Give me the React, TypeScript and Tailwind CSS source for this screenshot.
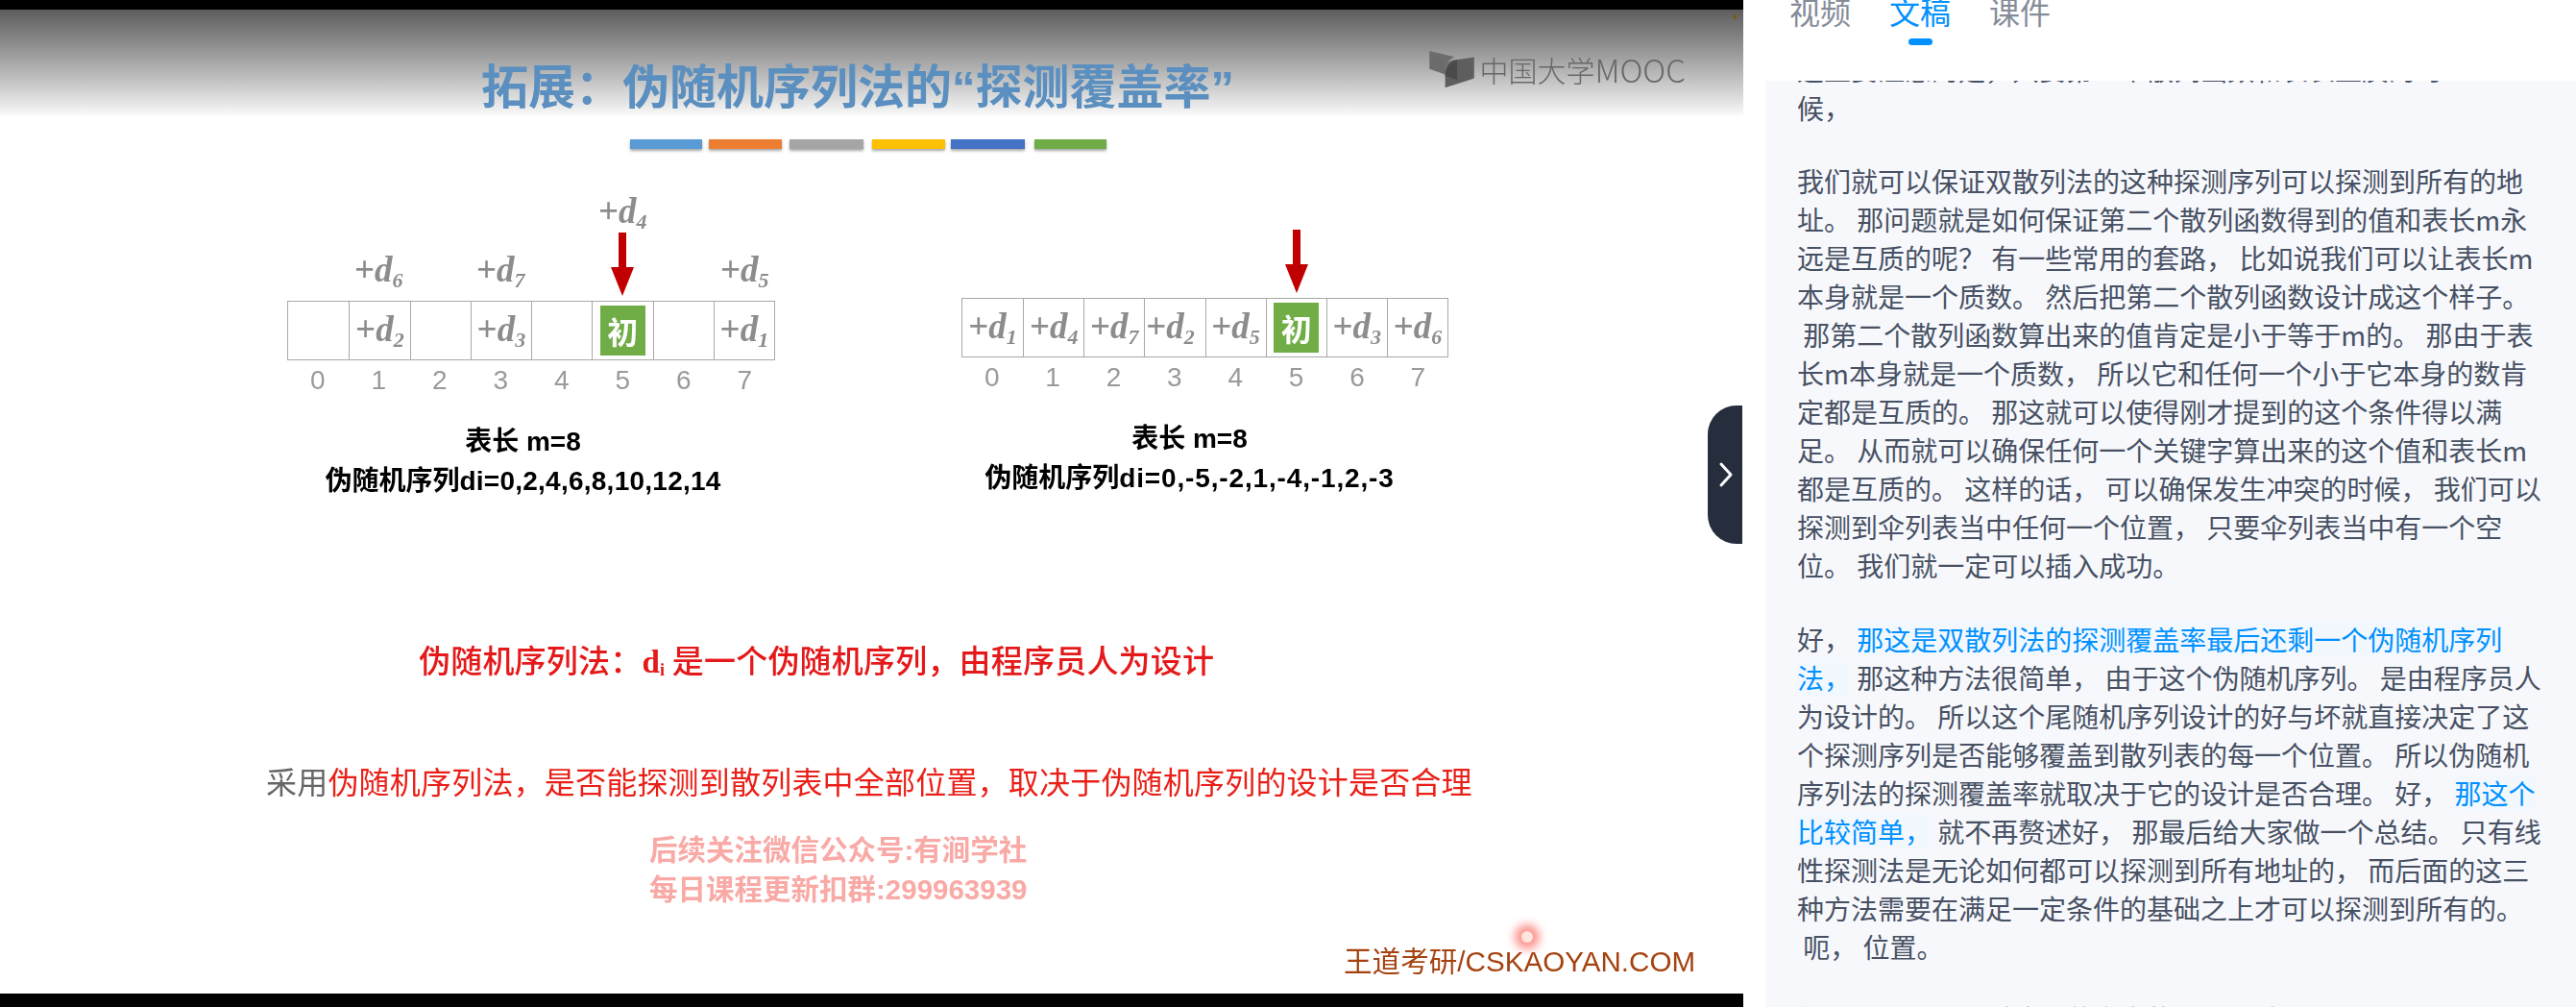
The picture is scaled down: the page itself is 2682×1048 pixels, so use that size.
import React from "react";

const cjk = "font-['Liberation_Sans','Noto_Sans_CJK_SC',sans-serif]";

function Probe({ n }: { n: number }) {
  return (
    <span className="font-['Liberation_Serif',serif] font-bold text-[#8c8c8c] text-[37px] leading-[40px] whitespace-nowrap">
      +<i>d</i>
      <i className="text-[22px] align-[-6px]">{n}</i>
    </span>
  );
}

function Arrow() {
  return (
    <svg width="24" height="66" viewBox="0 0 24 66" className="block">
      <path d="M8 0H16V36H24L12 66L0 36H8Z" fill="#c00000" />
    </svg>
  );
}

function Diagram({
  zoneH,
  above,
  cells,
  extra,
  captionShift,
  seq,
  seqTrack,
  width,
  nudge,
}: {
  zoneH: string;
  above: Record<number, number>;
  cells: (number | null | "init")[];
  extra?: number;
  captionShift: string;
  seq: string;
  seqTrack: string;
  width: string;
  nudge?: number;
}) {
  return (
    <div className={`flex flex-col ${width}`}>
      <div className={`grid grid-cols-8 ${zoneH}`}>
        {Array.from({ length: 8 }).map((_, i) => (
          <div key={i} className="flex flex-col items-center justify-end">
            {i === 5 ? (
              <>
                {extra !== undefined && (
                  <div className="-mb-[9px]">
                    <Probe n={extra} />
                  </div>
                )}
                <div className="mb-[5px]">
                  <Arrow />
                </div>
              </>
            ) : above[i] !== undefined ? (
              <div className="mb-[1px]">
                <Probe n={above[i]} />
              </div>
            ) : null}
          </div>
        ))}
      </div>
      <div className="grid grid-cols-8 h-[62px] border border-[#a8a8a8]">
        {cells.map((c, i) => (
          <div
            key={i}
            className={`flex items-center justify-center overflow-visible ${i > 0 ? "border-l border-[#a8a8a8]" : ""}`}
          >
            {c === "init" ? (
              <div className="w-[47px] h-[52px] bg-[#70ad47] flex items-center justify-center text-white text-[32px] font-bold font-['Noto_Sans_CJK_SC',sans-serif]">
                初
              </div>
            ) : c !== null ? (
              <div className={`pt-[8px] ${nudge === i ? "mr-[10px]" : ""}`}>
                <Probe n={c} />
              </div>
            ) : null}
          </div>
        ))}
      </div>
      <div className="grid grid-cols-8 h-[42px] items-center text-center text-[28px] leading-[42px] text-[#9a9a9a] font-['Liberation_Sans',sans-serif]">
        {[0, 1, 2, 3, 4, 5, 6, 7].map((n) => (
          <div key={n}>{n}</div>
        ))}
      </div>
      <div
        className={`mt-[23px] ${captionShift} text-center text-black font-bold text-[28px] whitespace-nowrap ${cjk}`}
      >
        <div className="leading-[40px]">表长 m=8</div>
        <div className="leading-[41px]">
          伪随机序列<span className={seqTrack}>{seq}</span>
        </div>
      </div>
    </div>
  );
}

type Seg = string | { b: string };

const para1: Seg[][] = [
  ["我们就可以保证双散列法的这种探测序列可以探测到所有的地"],
  ["址。 那问题就是如何保证第二个散列函数得到的值和表长m永"],
  ["远是互质的呢？ 有一些常用的套路， 比如说我们可以让表长m"],
  ["本身就是一个质数。 然后把第二个散列函数设计成这个样子。"],
  [" 那第二个散列函数算出来的值肯定是小于等于m的。 那由于表"],
  ["长m本身就是一个质数， 所以它和任何一个小于它本身的数肯"],
  ["定都是互质的。 那这就可以使得刚才提到的这个条件得以满"],
  ["足。 从而就可以确保任何一个关键字算出来的这个值和表长m"],
  ["都是互质的。 这样的话， 可以确保发生冲突的时候， 我们可以"],
  ["探测到伞列表当中任何一个位置， 只要伞列表当中有一个空"],
  ["位。 我们就一定可以插入成功。"],
];

const para2: Seg[][] = [
  ["好， ", { b: "那这是双散列法的探测覆盖率最后还剩一个伪随机序列" }],
  [{ b: "法，" }, " 那这种方法很简单， 由于这个伪随机序列。 是由程序员人"],
  ["为设计的。 所以这个尾随机序列设计的好与坏就直接决定了这"],
  ["个探测序列是否能够覆盖到散列表的每一个位置。 所以伪随机"],
  ["序列法的探测覆盖率就取决于它的设计是否合理。 好， ", { b: "那这个" }],
  [{ b: "比较简单，" }, " 就不再赘述好， 那最后给大家做一个总结。 只有线"],
  ["性探测法是无论如何都可以探测到所有地址的， 而后面的这三"],
  ["种方法需要在满足一定条件的基础之上才可以探测到所有的。"],
  [" 呃， 位置。"],
];

function Para({ lines, gap }: { lines: Seg[][]; gap: string }) {
  return (
    <div className={gap}>
      {lines.map((l, i) => (
        <div key={i} className="whitespace-pre h-[40px]">
          {l.map((s, j) =>
            typeof s === "string" ? (
              <span key={j}>{s}</span>
            ) : (
              <span key={j} className="text-[#0091ff] bg-[#f3f8ff]">
                {s.b}
              </span>
            ),
          )}
        </div>
      ))}
    </div>
  );
}

export default function App() {
  return (
    <div className="flex w-[2682px] h-[1048px] overflow-hidden bg-white">
      <div className="relative flex flex-col w-[1815px] h-full shrink-0">
        <div className="h-[10px] bg-black shrink-0" />
        <div className="flex-1 bg-white flex flex-col blur-[0.5px]">
          <header className="h-[110px] shrink-0 bg-linear-to-b from-[#5d5d5d] to-[#f9f9f9] flex items-start pl-[501px] pt-[42px] pr-[60px]">
            <h1
              className={`mt-[15px] text-[49px] leading-[48px] font-bold text-[#5a8fbf] whitespace-nowrap ${cjk}`}
            >
              拓展：伪随机序列法的“探测覆盖率”
            </h1>
            <div className="ml-auto flex items-center text-[#686868] font-['Noto_Sans_CJK_SC',sans-serif] font-light">
              <svg width="48" height="40" viewBox="20 40 145 122" className="mr-[4px] shrink-0">
                <path d="M20 43L100 62Q72 72 70 118L20 100Z" fill="#6c6c6c" />
                <path d="M162 63V130L70 160V118Q72 72 100 72Z" fill="#5e5e5e" />
                <path d="M70 118Q72 85 108 70V135L70 122Z" fill="#4a4a4a" />
              </svg>
              <span className="text-[30px] leading-[38px] whitespace-nowrap">中国大学</span>
              <span className="text-[33px] leading-[38px]">MOOC</span>
            </div>
          </header>

          <div className="flex pl-[656px] mt-[25px] shrink-0">
            <div className="w-[75px] h-[10px] mr-[7px] bg-[#5b9bd5] shadow-[0_2px_3px_rgba(0,0,0,0.35)]" />
            <div className="w-[76px] h-[10px] mr-[8px] bg-[#ed7d31] shadow-[0_2px_3px_rgba(0,0,0,0.35)]" />
            <div className="w-[77px] h-[10px] mr-[9px] bg-[#a5a5a5] shadow-[0_2px_3px_rgba(0,0,0,0.35)]" />
            <div className="w-[76px] h-[10px] mr-[6px] bg-[#ffc000] shadow-[0_2px_3px_rgba(0,0,0,0.35)]" />
            <div className="w-[77px] h-[10px] mr-[10px] bg-[#4472c4] shadow-[0_2px_3px_rgba(0,0,0,0.35)]" />
            <div className="w-[75px] h-[10px] bg-[#70ad47] shadow-[0_2px_3px_rgba(0,0,0,0.35)]" />
          </div>

          <div className="flex items-start pl-[299px] gap-[194px] shrink-0 h-[366px]">
            <Diagram
              width="w-[508px]"
              zoneH="h-[158px]"
              above={{ 1: 6, 3: 7, 7: 5 }}
              extra={4}
              cells={[null, 2, null, 3, null, "init", null, 1]}
              captionShift="mr-[17px]"
              seq="di=0,2,4,6,8,10,12,14"
              seqTrack="tracking-[0.25px]"
            />
            <Diagram
              width="w-[507px]"
              zoneH="h-[155px]"
              above={{}}
              cells={[1, 4, 7, 2, 5, "init", 3, 6]}
              captionShift="mr-[32px]"
              seq="di=0,-5,-2,1,-4,-1,2,-3"
              seqTrack="tracking-[0.85px]"
              nudge={3}
            />
          </div>

          <div className="mt-[140px] pl-[436px] h-[50px] leading-[50px] text-[33px] tracking-[0.2px] font-medium text-[#e5191a] whitespace-nowrap font-['Noto_Sans_CJK_SC',sans-serif]">
            伪随机序列法：
            <span className="font-['Liberation_Serif',serif] font-bold">d</span>
            <span className="font-['Liberation_Serif',serif] font-bold text-[18px] align-[-3px]">i</span>{" "}
            是一个伪随机序列，由程序员人为设计
          </div>

          <div className="mt-[76px] pl-[277px] h-[50px] leading-[50px] text-[32px] tracking-[0.2px] whitespace-nowrap text-[#ea2018] font-['Noto_Sans_CJK_SC',sans-serif]">
            <span className="text-[#666666]">采用</span>
            伪随机序列法，是否能探测到散列表中全部位置，取决于伪随机序列的设计是否合理
          </div>

          <div className={`mt-[27px] pl-[676px] text-[29.5px] font-bold text-[#f9aaa6] whitespace-nowrap ${cjk}`}>
            <div className="h-[41px] leading-[41px]">后续关注微信公众号:有涧学社</div>
            <div className="h-[41px] leading-[41px]">每日课程更新扣群:299963939</div>
          </div>

          <div className={`mt-[35px] pl-[1399px] h-[40px] leading-[40px] text-[29.6px] text-[#a5420f] whitespace-nowrap ${cjk}`}>
            王道考研/CSKAOYAN.COM
          </div>
        </div>
        <div className="h-[14px] bg-black shrink-0" />

        {/* laser pointer */}
        <div className="absolute left-[1584px] top-[969px] w-[12px] h-[12px] rounded-full bg-[#ffe4e0] shadow-[0_0_10px_7px_rgba(250,90,80,0.65)]" />
        {/* dust spot */}
        <div className="absolute left-[1804px] top-[15px] w-[4px] h-[5px] rounded-full bg-[#7a5a20]" />
        {/* collapse handle */}
        <button className="absolute right-[1px] top-[422px] w-[36px] h-[144px] rounded-l-[30px] bg-[#262d3d] flex items-center justify-center">
          <svg width="16" height="28" viewBox="0 0 16 28" fill="none" className="ml-[2px]">
            <path d="M3 3L13 14L3 25" stroke="white" strokeWidth="3" strokeLinecap="round" strokeLinejoin="round" />
          </svg>
        </button>
      </div>

      <aside className="flex-1 flex flex-col font-['Noto_Sans_CJK_SC',sans-serif] min-w-0">
        <nav className="h-[84px] shrink-0 overflow-hidden flex items-start pl-[48px] gap-[40px] text-[32px] leading-[44px] text-[#858c99]">
          <div className="-mt-[11px]">视频</div>
          <div className="-mt-[11px] flex flex-col items-center text-[#0091ff]">
            <span>文稿</span>
            <span className="mt-[7px] w-[25px] h-[7px] rounded-full bg-[#0091ff]" />
          </div>
          <div className="-mt-[11px]">课件</div>
        </nav>
        <div className="flex-1 ml-[23px] pl-[33px] overflow-hidden bg-[#f7f8fc] text-[28px] leading-[40px] text-[#475163]">
          <div className="-mt-[32px]">
            <Para
              gap="mb-[36px]"
              lines={[
                ["这里要注意的是，只要第二个散列函数和表长互质的时"],
                ["候，"],
              ]}
            />
            <Para gap="mb-[37px]" lines={para1} />
            <Para gap="mb-[35px]" lines={para2} />
            <Para gap="mb-0" lines={[["好，下面是我们对这一节内容的一个小结"]]} />
          </div>
        </div>
      </aside>
    </div>
  );
}
